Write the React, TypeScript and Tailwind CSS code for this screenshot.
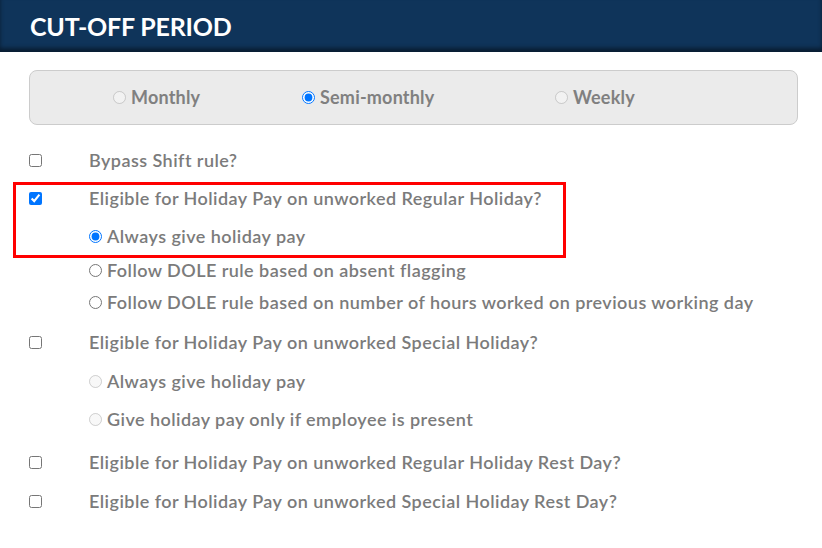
import React, { useState } from 'react';

const font = { fontFamily: 'Lato, "Noto Sans", sans-serif' };

type Row =
  | { kind: 'check'; label: string; checked?: boolean; h: string }
  | { kind: 'radio'; label: string; group: string; checked?: boolean; disabled?: boolean; h: string };

const rows: Row[] = [
  { kind: 'check', label: 'Bypass Shift rule?', h: 'h-[38px]' },
  { kind: 'check', label: 'Eligible for Holiday Pay on unworked Regular Holiday?', checked: true, h: 'h-[39px]' },
  { kind: 'radio', label: 'Always give holiday pay', group: 'reg', checked: true, h: 'h-[37px]' },
  { kind: 'radio', label: 'Follow DOLE rule based on absent flagging', group: 'reg', h: 'h-[30px]' },
  { kind: 'radio', label: 'Follow DOLE rule based on number of hours worked on previous working day', group: 'reg', h: 'h-[34px]' },
  { kind: 'check', label: 'Eligible for Holiday Pay on unworked Special Holiday?', h: 'h-[46px]' },
  { kind: 'radio', label: 'Always give holiday pay', group: 'spc', disabled: true, h: 'h-[32px]' },
  { kind: 'radio', label: 'Give holiday pay only if employee is present', group: 'spc', disabled: true, h: 'h-[45px]' },
  { kind: 'check', label: 'Eligible for Holiday Pay on unworked Regular Holiday Rest Day?', h: 'h-[41px]' },
  { kind: 'check', label: 'Eligible for Holiday Pay on unworked Special Holiday Rest Day?', h: 'h-[36px]' },
];

export default function App() {
  const [period, setPeriod] = useState('semi');

  return (
    <div className="w-[822px] h-[548px] bg-white overflow-hidden" style={font}>
      {/* header */}
      <div className="h-[52px] bg-[#0f345a] flex items-center px-[30px] shadow-[inset_0_-4px_4px_rgba(0,0,0,0.45)]">
        <h1 className="text-white text-[25px] font-bold tracking-[-0.2px] leading-none">CUT-OFF PERIOD</h1>
      </div>

      {/* period selector */}
      <div className="ml-[29px] w-[769px] mt-[18px] h-[55px] bg-[#ebebeb] border border-[#cccccc] rounded-[8px] flex items-center pl-[83px] text-[18px] font-bold tracking-[0.2px] text-[#808080]">
        {[
          { id: 'monthly', label: 'Monthly', w: 'w-[189px]' },
          { id: 'semi', label: 'Semi-monthly', w: 'w-[253px]' },
          { id: 'weekly', label: 'Weekly', w: 'w-auto' },
        ].map((p) => (
          <label key={p.id} className={`flex items-center gap-[5px] ${p.w}`}>
            <input
              type="radio"
              name="period"
              className="w-[13px] h-[13px]"
              checked={period === p.id}
              onChange={() => setPeriod(p.id)}
              disabled={p.id !== 'semi'}
            />
            {p.label}
          </label>
        ))}
      </div>

      {/* options */}
      <div className="relative mt-[16px] px-[29px] text-[18px] font-semibold tracking-[0.45px] text-[#7b7b7b]">
        <div className="absolute left-[13px] top-[41px] w-[553px] h-[76px] border-[3px] border-[#ff0000] pointer-events-none" />
        {rows.map((r, i) =>
          r.kind === 'check' ? (
            <label key={i} className={`flex items-center whitespace-nowrap ${r.h}`}>
              <input type="checkbox" defaultChecked={r.checked} className="w-[13px] h-[13px] mr-[47px]" />
              {r.label}
            </label>
          ) : (
            <label key={i} className={`flex items-center whitespace-nowrap pl-[60px] ${r.h}`}>
              <input
                type="radio"
                name={r.group}
                defaultChecked={r.checked}
                disabled={r.disabled}
                className="w-[13px] h-[13px] mr-[5px]"
              />
              {r.label}
            </label>
          )
        )}
      </div>
    </div>
  );
}
